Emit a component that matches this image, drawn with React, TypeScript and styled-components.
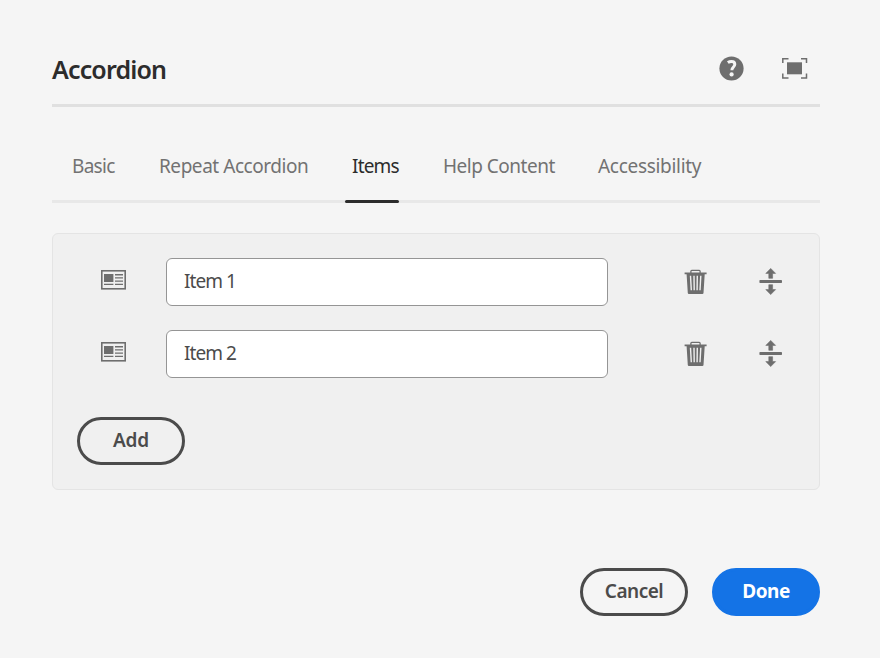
import React, { useState } from "react";
import styled, { createGlobalStyle } from "styled-components";

const GlobalStyle = createGlobalStyle`
  * { box-sizing: border-box; }
  body { margin: 0; background: #f5f5f5; font-family: "Noto Sans", "Open Sans", sans-serif; }
  button, input { font-family: inherit; margin: 0; }
`;

const Dialog = styled.main`
  width: 880px;
  height: 658px;
  padding: 32px 60px 42px 52px;
  display: flex;
  flex-direction: column;
  background: #f5f5f5;
`;

const Header = styled.header`
  height: 75px;
  display: flex;
  justify-content: space-between;
  padding-right: 12px;
  border-bottom: 3px solid #e0e0e0;
`;

const Title = styled.h1`
  margin: 0;
  font-size: 25px;
  line-height: 36px;
  padding-top: 19px;
  font-weight: 600;
  letter-spacing: -0.85px;
  color: #2c2c2c;
`;

const HeaderActions = styled.div`
  display: flex;
  align-items: flex-start;
  gap: 37px;
  padding-top: 24px;
`;

const IconButton = styled.button`
  display: block;
  padding: 0;
  border: 0;
  background: none;
  color: #6e6e6e;
  cursor: pointer;
  svg { display: block; }
`;

const TabBar = styled.nav`
  height: 96px;
  display: flex;
  padding-left: 20px;
  border-bottom: 3px solid #e8e8e8;
`;

const Tab = styled.button<{ $active: boolean; $width: number; $tracking: number }>`
  position: relative;
  width: ${(p) => p.$width}px;
  flex: none;
  padding: 46px 0 0;
  border: 0;
  background: none;
  text-align: left;
  display: flex;
  align-items: flex-start;
  white-space: nowrap;
  font-size: 19px;
  line-height: 26px;
  letter-spacing: ${(p) => p.$tracking}px;
  color: ${(p) => (p.$active ? "#2c2c2c" : "#727272")};
  cursor: pointer;
`;

const Indicator = styled.span`
  position: absolute;
  left: -7.5px;
  bottom: -3px;
  width: 54px;
  height: 3px;
  border-radius: 1.5px;
  background: #2c2c2c;
`;

const Panel = styled.section`
  height: 257px;
  margin-top: 30px;
  padding: 24px;
  border: 1px solid #e4e4e4;
  border-radius: 6px;
  background: #f0f0f0;
`;

const ItemRow = styled.div`
  height: 48px;
  margin-bottom: 24px;
  padding-left: 24px;
  display: grid;
  grid-template-columns: 65px 442px 76px 75px 24px;
  color: #6e6e6e;
`;

const IconCell = styled.div`
  padding-top: 11px;
  svg { display: block; }
`;

const ItemInput = styled.input`
  width: 442px;
  height: 48px;
  padding: 0 17px 2px;
  border: 1px solid #959595;
  border-radius: 6px;
  outline: 0;
  background: #fff;
  color: #4b4b4b;
  font-size: 19px;
  letter-spacing: -0.95px;
`;

const PillButton = styled.button<{ $primary?: boolean; $tracking?: number }>`
  width: 108px;
  height: 48px;
  padding: 0 0 2px;
  border: 3px solid ${(p) => (p.$primary ? "#1473e6" : "#4b4b4b")};
  border-radius: 24px;
  background: ${(p) => (p.$primary ? "#1473e6" : "transparent")};
  color: ${(p) => (p.$primary ? "#fff" : "#4b4b4b")};
  font-size: 19px;
  font-weight: ${(p) => (p.$primary ? 700 : 600)};
  letter-spacing: ${(p) => p.$tracking ?? 0}px;
  cursor: pointer;
`;

const AddSlot = styled.div`
  padding-top: 15px;
`;

const Footer = styled.footer`
  margin-top: auto;
  display: flex;
  justify-content: flex-end;
  gap: 24px;
`;

const HelpIcon = () => (
  <svg width="26" height="25" viewBox="0 0 26 25">
    <circle cx="12.5" cy="12.5" r="12.1" fill="currentColor" />
    <path d="M8.8 6.6C10 5.8 11.1 5.4 12.4 5.4c2.1 0 3.4 1.1 3.4 2.9 0 1.5-.8 2.3-1.7 3.2-.8.8-1.2 1.4-1.2 2.8" fill="none" stroke="#f5f5f5" strokeWidth="3" />
    <circle cx="12.6" cy="18.4" r="2.1" fill="#f5f5f5" />
  </svg>
);

const FullscreenIcon = () => (
  <svg width="26" height="25" viewBox="0 0 26 25">
    <path d="M.8 7V2.7h5.7M19 2.7h5.5V7M24.5 17.5v4.6H19M6.5 22.1H.8v-4.6" fill="none" stroke="currentColor" strokeWidth="1.5" />
    <rect x="5" y="6.3" width="15" height="12" fill="currentColor" />
  </svg>
);

const ArticleIcon = () => (
  <svg width="25" height="22" viewBox="0 0 25 22">
    <rect x="0.8" y="1.8" width="23.4" height="18" fill="none" stroke="currentColor" strokeWidth="1.6" />
    <rect x="3" y="5" width="9.4" height="8" fill="currentColor" />
    <path d="M3 15.4h9.4M14 5.7h8M14 8.9h8M14 12.1h8M14 15.4h8" stroke="currentColor" strokeWidth="1.4" />
  </svg>
);

const TrashIcon = () => (
  <svg width="23" height="26" viewBox="0 0 23 26">
    <path d="M6.9 4.4V2.2Q6.9 1.3 7.8 1.3h7.4q.9 0 .9.9v2.2" fill="none" stroke="currentColor" strokeWidth="1.3" />
    <path fill="currentColor" d="M.6 3.6h22v1.7h-1.9l-1.2 18.8q-.1 1-1.1 1H4.9q-1 0-1.1-1L2.6 5.3h-2z" />
    <path d="M6.5 6.7l.8 14.6M10 6.7l.2 14.6M13.3 6.7l-.2 14.6M16.8 6.7l-.8 14.6" stroke="#f0f0f0" strokeWidth="1.4" fill="none" />
  </svg>
);

const MoveIcon = () => (
  <svg width="24" height="28" viewBox="0 0 24 28">
    <path fill="currentColor" stroke="currentColor" strokeWidth=".6" strokeLinejoin="round" d="M11.7.4l4.9 5H13.6v4.9H9.8V5.4H6.8zM11.7 26.6l4.9-5H13.6v-4.9H9.8v4.9H6.8z" />
    <rect x="0.4" y="12" width="22.6" height="3" rx=".7" fill="currentColor" />
  </svg>
);

const tabs = [
  { label: "Basic", width: 87, tracking: -0.7 },
  { label: "Repeat Accordion", width: 193, tracking: -0.45 },
  { label: "Items", width: 91, tracking: -0.8 },
  { label: "Help Content", width: 155, tracking: -0.5 },
  { label: "Accessibility", width: 120, tracking: -0.3 },
];

export default function App() {
  const [active, setActive] = useState("Items");
  const [items, setItems] = useState(["Item 1", "Item 2"]);

  return (
    <>
      <GlobalStyle />
      <Dialog>
        <Header>
          <Title>Accordion</Title>
          <HeaderActions>
            <IconButton aria-label="Help"><HelpIcon /></IconButton>
            <IconButton aria-label="Fullscreen"><FullscreenIcon /></IconButton>
          </HeaderActions>
        </Header>
        <TabBar>
          {tabs.map((t) => (
            <Tab key={t.label} $active={t.label === active} $width={t.width} $tracking={t.tracking} onClick={() => setActive(t.label)}>
              {t.label}
              {t.label === active && <Indicator />}
            </Tab>
          ))}
        </TabBar>
        <Panel>
          {items.map((item, i) => (
            <ItemRow key={i}>
              <IconCell><ArticleIcon /></IconCell>
              <ItemInput value={item} onChange={(e) => setItems(items.map((v, n) => (n === i ? e.target.value : v)))} />
              <IconCell />
              <IconButton aria-label="Delete" onClick={() => setItems(items.filter((_, n) => n !== i))}><TrashIcon /></IconButton>
              <IconButton aria-label="Reorder"><MoveIcon /></IconButton>
            </ItemRow>
          ))}
          <AddSlot>
            <PillButton $tracking={-0.2} onClick={() => setItems([...items, ""])}>Add</PillButton>
          </AddSlot>
        </Panel>
        <Footer>
          <PillButton $tracking={-0.5}>Cancel</PillButton>
          <PillButton $primary $tracking={-0.5}>Done</PillButton>
        </Footer>
      </Dialog>
    </>
  );
}
